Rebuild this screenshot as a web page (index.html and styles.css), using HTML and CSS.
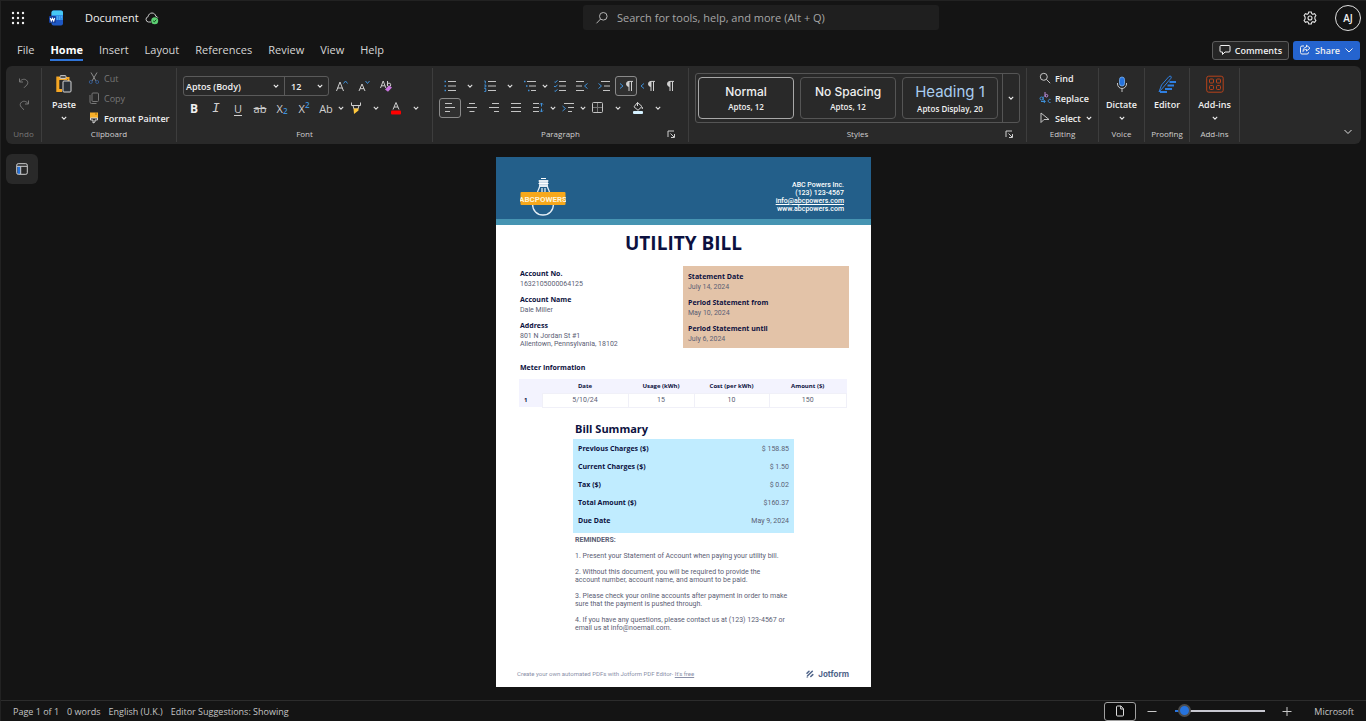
FILE: index.html
```html
<!DOCTYPE html>
<html lang="en">
<head>
    <meta charset="UTF-8">
    <meta name="viewport" content="width=device-width, initial-scale=1.0">
    <title>Document - Word</title>
    <link rel="stylesheet" href="styles.css">
</head>
<body>
    <!-- shared icons -->
    <svg class="sprite" aria-hidden="true">
        <symbol id="chev" viewBox="0 0 8 8"><path d="M1.8 2.9 4 5.1 6.2 2.9" fill="none" stroke="currentColor" stroke-width="1.1"/></symbol>
        <symbol id="launch" viewBox="0 0 9 9"><path d="M1 7V1h6M3.5 3.5 7 7M7.5 4v3.5H4" fill="none" stroke="currentColor"/></symbol>
        <symbol id="pilcrow" viewBox="0 0 10 12"><path d="M5 6.4a2.5 2.5 0 0 1 0-5h4M5 1.4V11M7.5 1.4V11" fill="none" stroke="currentColor"/><path d="M5 1.4a2.5 2.5 0 0 0 0 5z" fill="currentColor"/></symbol>
    </svg>

    <header class="titlebar">
        <div class="title-left">
            <button class="plain" aria-label="App launcher">
                <svg width="14" height="14" viewBox="0 0 14 14" fill="#f2f2f2"><circle cx="2" cy="2" r="1.2"/><circle cx="7" cy="2" r="1.2"/><circle cx="12" cy="2" r="1.2"/><circle cx="2" cy="7" r="1.2"/><circle cx="7" cy="7" r="1.2"/><circle cx="12" cy="7" r="1.2"/><circle cx="2" cy="12" r="1.2"/><circle cx="7" cy="12" r="1.2"/><circle cx="12" cy="12" r="1.2"/></svg>
            </button>
            <svg class="word-logo" width="14" height="16" viewBox="0 0 14 16">
                <rect x="2.5" y="0.5" width="11.500" height="15" rx="2" fill="#1e58c4"/>
                <path d="M4.500 .5H12a2 2 0 0 1 2 2V5H2.500V2.500a2 2 0 0 1 2-2z" fill="#46c8f5"/>
                <path d="M2.500 5H14v5H2.500z" fill="#2f8fe8"/>
                <path d="M8 7h1M10 7h1M12 7h1M8 9h1M10 9h1" stroke="#7cc8ff" stroke-width=".8"/>
                <rect x="0" y="6" width="7" height="7" rx="1" fill="#173f9c"/>
                <path d="M1.300 8 2.300 11 3.500 8.300 4.700 11 5.700 8" fill="none" stroke="#fff" stroke-width="1.1"/>
            </svg>
            <span class="doc-name">Document</span>
            <svg width="14" height="14" viewBox="0 0 14 14">
                <path d="M6 11H3.400a2.700 2.700 0 0 1-.3-5.300C3.400 3.500 5 2 7 2c2 0 3.500 1.400 3.800 3.300 1 .1 1.700.6 2 1.300" fill="none" stroke="#c8c8c8"/>
                <circle cx="9.700" cy="9.700" r="3.500" fill="#5ccf72"/>
                <path d="m8.200 9.900 1.100 1 2-2.200" fill="none" stroke="#14431d"/>
            </svg>
        </div>
        <label class="search">
            <svg width="14" height="14" viewBox="0 0 14 14" fill="none" stroke="#b4b4b4"><circle cx="8.300" cy="5.300" r="3.800"/><path d="M5.600 8 1.500 12.300"/></svg>
            <input type="text" placeholder="Search for tools, help, and more (Alt + Q)" aria-label="Search">
        </label>
        <div class="title-right">
            <button class="plain" aria-label="Settings">
                <svg width="14" height="14" viewBox="0 0 14 14" fill="none" stroke="#e6e6e6" stroke-width="1.100"><path d="M5.700 1h2.600l.4 1.700 1.200.6 1.700-.7 1.300 1.900-1 1.500v2l1 1.500-1.300 1.900-1.700-.7-1.200.6L8.300 13H5.700l-.4-1.700-1.200-.6-1.700.7L1.100 9.500l1-1.500V6l-1-1.500 1.300-1.900 1.700.7 1.200-.6z"/><circle cx="7" cy="7" r="2"/></svg>
            </button>
            <button class="avatar">AJ</button>
        </div>
    </header>

    <div class="tabbar">
        <nav class="tabs">
            <a href="#">File</a>
            <a href="#" class="active">Home</a>
            <a href="#">Insert</a>
            <a href="#">Layout</a>
            <a href="#">References</a>
            <a href="#">Review</a>
            <a href="#">View</a>
            <a href="#">Help</a>
        </nav>
        <div class="tab-actions">
            <button class="comments">
                <svg width="12" height="12" viewBox="0 0 12 12" fill="none" stroke="currentColor"><path d="M2 1.500h8a1 1 0 0 1 1 1V7a1 1 0 0 1-1 1H6l-2.500 2.500V8H2a1 1 0 0 1-1-1V2.500a1 1 0 0 1 1-1z"/></svg>
                Comments
            </button>
            <button class="share">
                <svg width="12" height="12" viewBox="0 0 12 12" fill="none" stroke="currentColor"><path d="M5 2H3a1.500 1.500 0 0 0-1.500 1.500v5A1.500 1.500 0 0 0 3 10h5a1.500 1.500 0 0 0 1.500-1.500V8"/><path d="M7.500 1.200 11 4.200 7.500 7V5.400C5.700 5.400 4.800 6 4 7.500c0-2.500 1.200-4.200 3.500-4.500z"/></svg>
                Share
                <svg width="10" height="10" viewBox="0 0 10 10"><path d="M1.500 3.500 5 7l3.500-3.500" fill="none" stroke="currentColor"/></svg>
            </button>
        </div>
    </div>

    <section class="ribbon">
        <div class="group undo">
            <div class="content stack">
                <button class="tool dim" aria-label="Undo"><svg width="12" height="12" viewBox="0 0 12 12" fill="none" stroke="currentColor"><path d="M1.500 1.500V5H5M1.700 4.800C3.300 2.500 6 1.500 8.300 3c2 1.500 1.800 3.700.5 5L6 10.800"/></svg></button>
                <button class="tool dim" aria-label="Redo"><svg width="12" height="12" viewBox="0 0 12 12" fill="none" stroke="currentColor"><path d="M10.500 1.500V5H7M10.300 4.800C8.700 2.500 6 1.500 3.700 3c-2 1.500-1.800 3.700-.5 5L6 10.800"/></svg></button>
            </div>
            <div class="label dim"><span>Undo</span></div>
        </div>

        <div class="group clipboard">
            <div class="content">
                <button class="big">
                    <svg width="18" height="20" viewBox="0 0 18 20"><path d="M4 4H2.800v12.500H7" fill="none" stroke="#f5a623" stroke-width="3"/><path d="M4 3h8v3H4z" fill="#f5a623"/><path d="M12 4h1.500v3" fill="none" stroke="#f5a623" stroke-width="2"/><rect x="5" y="1.500" width="6" height="3" rx="1" fill="#555" stroke="#ddd" stroke-width=".8"/><rect x="8" y="7" width="8" height="11" rx="1" fill="#2b3138" stroke="#d6d6d6"/></svg>
                    <span>Paste</span>
                    <svg width="8" height="8"><use href="#chev"/></svg>
                </button>
                <div class="lines">
                    <button class="line dim"><svg width="12" height="12" viewBox="0 0 12 12" fill="none"><path d="M3 .5 8 9M9 .5 4 9" stroke="#8b8b8b"/><circle cx="2.800" cy="10" r="1.500" stroke="#35598c"/><circle cx="9.200" cy="10" r="1.500" stroke="#35598c"/></svg>Cut</button>
                    <button class="line dim"><svg width="12" height="12" viewBox="0 0 12 12" fill="none" stroke="currentColor"><rect x="4" y="1" width="6.500" height="8.500" rx="1"/><path d="M2 3v7a1.500 1.500 0 0 0 1.500 1.500h5"/></svg>Copy</button>
                    <button class="line"><svg width="12" height="12" viewBox="0 0 12 12"><path d="M2 .5h8V6H2z" fill="#f8b02a"/><path d="M8 .5V3" stroke="#8a5a00" stroke-width=".8"/><path d="M2.500 6v2H5v3l2-1V8h2.500V6z" fill="#2a2a2a" stroke="#e4e4e4" stroke-width=".9"/></svg>Format Painter</button>
                </div>
            </div>
            <div class="label"><span>Clipboard</span></div>
        </div>

        <div class="group font">
            <div class="content rows">
                <div class="row">
                    <div class="combo">
                        <button class="combo-font">Aptos (Body)<svg width="8" height="8"><use href="#chev"/></svg></button>
                        <button class="combo-size">12<svg width="8" height="8"><use href="#chev"/></svg></button>
                    </div>
                    <button class="tool push" aria-label="Grow font"><svg width="14" height="14" viewBox="0 0 14 14" fill="none"><path d="M1.500 12 5 3l3.500 9M2.700 9h4.600" stroke="#cfcfcf"/><path d="m8.500 4.500 2-2.500 2 2.500" stroke="#3f90d8"/></svg></button>
                    <button class="tool" aria-label="Shrink font"><svg width="14" height="14" viewBox="0 0 14 14" fill="none"><path d="M2 12l3-7 3 7M3 9.700h4" stroke="#cfcfcf"/><path d="m8.500 2 2 2.500 2-2.500" stroke="#3f90d8"/></svg></button>
                    <button class="tool" aria-label="Clear formatting"><svg width="14" height="14" viewBox="0 0 14 14" fill="none"><path d="m1.500 9 2.700-7 2.700 7M2.500 6.800h3.400M8.500 2v5" stroke="#cfcfcf"/><circle cx="10" cy="5.800" r="1.700" stroke="#cfcfcf"/><path d="m6 10.500 4-4 3 2-4 4.300z" fill="#c774dd"/></svg></button>
                </div>
                <div class="row">
                    <button class="tool bold">B</button>
                    <button class="tool italic">I</button>
                    <button class="tool under">U</button>
                    <button class="tool strike">ab</button>
                    <button class="tool script">X<sub>2</sub></button>
                    <button class="tool script">X<sup>2</sup></button>
                    <button class="tool">Ab</button>
                    <button class="drop" aria-label="Change case options"><svg width="8" height="8"><use href="#chev"/></svg></button>
                    <button class="tool" aria-label="Highlight"><svg width="14" height="14" viewBox="0 0 14 14" fill="none"><path d="M2.500 1.500v3h9v-3M4 4.500 5 8h4l1-3.500" stroke="#cfcfcf"/><path d="M4.500 7.500h5v2L5 13z" fill="#ffc83d"/></svg></button>
                    <button class="drop wide" aria-label="Highlight options"><svg width="8" height="8"><use href="#chev"/></svg></button>
                    <button class="tool" aria-label="Font color"><svg width="14" height="14" viewBox="0 0 14 14" fill="none"><path d="m4 8.500 3-7 3 7M5 6h4" stroke="#cfcfcf"/><rect x="2" y="9.500" width="10" height="4" rx="1" fill="#f00"/></svg></button>
                    <button class="drop wide" aria-label="Font color options"><svg width="8" height="8"><use href="#chev"/></svg></button>
                </div>
            </div>
            <div class="label"><span>Font</span></div>
        </div>

        <div class="group paragraph">
            <div class="content rows">
                <div class="row">
                    <button class="tool" aria-label="Bullets"><svg width="12" height="12" viewBox="0 0 12 12"><path d="M4 1.500h8M4 6h8M4 10.500h8" stroke="#c4c4c4"/><path d="M.5 1.500h1.500M.5 6h1.500M.5 10.500h1.500" stroke="#3f90d8" stroke-width="1.500"/></svg></button>
                    <button class="drop wide" aria-label="Bullet options"><svg width="8" height="8"><use href="#chev"/></svg></button>
                    <button class="tool" aria-label="Numbering"><svg width="12" height="12" viewBox="0 0 12 12"><path d="M4 1.500h8M4 6h8M4 10.500h8" stroke="#c4c4c4"/><path d="M.3 1h1v2.500M.3 5h1.500v2H.3M.3 8.500h1.500v3H.3" fill="none" stroke="#3f90d8"/></svg></button>
                    <button class="drop wide" aria-label="Numbering options"><svg width="8" height="8"><use href="#chev"/></svg></button>
                    <button class="tool" aria-label="Multilevel list"><svg width="12" height="12" viewBox="0 0 12 12"><path d="M3 1.500h9M5 6h7M7 10.500h5" stroke="#c4c4c4"/><path d="M0 1.500h1.500M2 6h1.500M4 10.500h1.500" stroke="#3f90d8" stroke-width="1.500"/></svg></button>
                    <button class="drop" aria-label="Multilevel options"><svg width="8" height="8"><use href="#chev"/></svg></button>
                    <button class="tool" aria-label="Checklist"><svg width="12" height="12" viewBox="0 0 12 12" fill="none"><path d="M5 1.500h7M5 6h7M5 10.500h7" stroke="#c4c4c4"/><path d="m0 1.500 1 1L3.500.5M0 6l1 1L3.500 5M0 10.500l1 1 2.500-2" stroke="#3f90d8"/></svg></button>
                    <button class="tool" aria-label="Decrease indent"><svg width="12" height="12" viewBox="0 0 12 12" fill="none"><path d="M0 1.500h8M0 6h6M0 10.500h8" stroke="#c4c4c4"/><path d="M11.500 3.500 8.500 6l3 2.500" stroke="#3f90d8"/></svg></button>
                    <button class="tool" aria-label="Increase indent"><svg width="12" height="12" viewBox="0 0 12 12" fill="none"><path d="M3 1.500h9M6 6h6M5 10.500h7" stroke="#c4c4c4"/><path d="m.5 3.500 3 2.500-3 2.500" stroke="#3f90d8"/></svg></button>
                    <button class="tool on" aria-label="Left to right"><svg width="6" height="8" viewBox="0 0 6 8"><path d="m2 1.500 3 2.500-3 2.500" fill="none" stroke="#3f90d8"/></svg><svg width="10" height="12"><use href="#pilcrow"/></svg></button>
                    <button class="tool" aria-label="Right to left"><svg width="6" height="8" viewBox="0 0 6 8"><path d="M4 1.500 1 4l3 2.500" fill="none" stroke="#3f90d8"/></svg><svg width="10" height="12"><use href="#pilcrow"/></svg></button>
                    <button class="tool" aria-label="Show marks"><svg width="10" height="12"><use href="#pilcrow"/></svg></button>
                </div>
                <div class="row">
                    <button class="tool on" aria-label="Align left"><svg width="12" height="12" viewBox="0 0 12 12"><path d="M1 1.500h7M1 5.500h10M1 9.500h5" stroke="#c4c4c4"/></svg></button>
                    <button class="tool" aria-label="Center"><svg width="12" height="12" viewBox="0 0 12 12"><path d="M3 1.500h6M1 5.500h10M3.500 9.500h5" stroke="#c4c4c4"/></svg></button>
                    <button class="tool" aria-label="Align right"><svg width="12" height="12" viewBox="0 0 12 12"><path d="M4 1.500h7M1 5.500h10M6 9.500h5" stroke="#c4c4c4"/></svg></button>
                    <button class="tool" aria-label="Justify"><svg width="12" height="12" viewBox="0 0 12 12"><path d="M1 1.500h10M1 5.500h10M1 9.500h10" stroke="#c4c4c4"/></svg></button>
                    <button class="tool" aria-label="Line spacing"><svg width="12" height="12" viewBox="0 0 12 12" fill="none"><path d="M1 1.500h6M1 5.500h6M1 9.500h6" stroke="#c4c4c4"/><path d="M9.500 1v3.500M9.500 6.500V10M8 2.500 9.500 1 11 2.500M8 8.500 9.500 10 11 8.500" stroke="#3f90d8"/></svg></button>
                    <button class="drop" aria-label="Spacing options"><svg width="8" height="8"><use href="#chev"/></svg></button>
                    <button class="tool" aria-label="Special indent"><svg width="12" height="12" viewBox="0 0 12 12" fill="none"><path d="M2 1.500h10M6 5.500h6M6 9.500h4" stroke="#c4c4c4"/><path d="m.5 4 3 2.500-3 2.500" stroke="#3f90d8"/></svg></button>
                    <button class="drop" aria-label="Indent options"><svg width="8" height="8"><use href="#chev"/></svg></button>
                    <button class="tool" aria-label="Borders"><svg width="12" height="12" viewBox="0 0 12 12" fill="none"><rect x=".5" y=".5" width="10" height="10" rx="1" stroke="#c4c4c4"/><path d="M5.500 1v9M1 5.500h9" stroke="#777"/></svg></button>
                    <button class="drop wide" aria-label="Border options"><svg width="8" height="8"><use href="#chev"/></svg></button>
                    <button class="tool" aria-label="Shading"><svg width="12" height="14" viewBox="0 0 12 14" fill="none"><path d="M5.500 1.500 10 5.500 6 9.300 2 5.800zM5.500 1.500V5M10.300 6v2" stroke="#d8d8d8"/><rect x="1" y="10" width="10" height="3" rx="1" fill="#d4f1ff"/></svg></button>
                    <button class="drop wide" aria-label="Shading options"><svg width="8" height="8"><use href="#chev"/></svg></button>
                </div>
            </div>
            <div class="label"><span>Paragraph</span><button class="launcher" aria-label="Paragraph settings"><svg width="9" height="9"><use href="#launch"/></svg></button></div>
        </div>

        <div class="group styles">
            <div class="content">
                <div class="gallery">
                    <button class="style-card selected"><b>Normal</b><span>Aptos, 12</span></button>
                    <button class="style-card"><b>No Spacing</b><span>Aptos, 12</span></button>
                    <button class="style-card heading"><b>Heading 1</b><span>Aptos Display, 20</span></button>
                    <button class="more" aria-label="More styles"><svg width="8" height="8"><use href="#chev"/></svg></button>
                </div>
            </div>
            <div class="label"><span>Styles</span><button class="launcher" aria-label="Style settings"><svg width="9" height="9"><use href="#launch"/></svg></button></div>
        </div>

        <div class="group editing">
            <div class="content">
                <div class="lines">
                    <button class="line"><svg width="12" height="12" viewBox="0 0 12 12" fill="none" stroke="#c4c4c4"><circle cx="4.800" cy="4.800" r="3.500"/><path d="m7.400 7.400 3.800 3.800"/></svg>Find</button>
                    <button class="line"><svg width="12" height="12" viewBox="0 0 12 12" fill="none"><path d="M6 0v5" stroke="#b98bd8"/><circle cx="7.500" cy="3.700" r="1.300" stroke="#b98bd8"/><circle cx="2.500" cy="6.500" r="1.500" stroke="#3f90d8"/><path d="M4.200 4.500V8.500M2 9.500h4M4.800 8l1.500 1.500L4.800 11M11.500 7.500c-2.500-1-3.500 3.500 0 3" stroke="#3f90d8"/></svg>Replace</button>
                    <button class="line"><svg width="12" height="12" viewBox="0 0 12 12" fill="none" stroke="#c4c4c4"><path d="M2 1v9.500l3-3h5z"/></svg>Select<svg width="8" height="8"><use href="#chev"/></svg></button>
                </div>
            </div>
            <div class="label"><span>Editing</span></div>
        </div>

        <div class="group voice">
            <div class="content">
                <button class="big">
                    <svg width="18" height="20" viewBox="0 0 18 20" fill="none"><rect x="6.500" y="3" width="5" height="9" rx="2.500" fill="#2673dd" stroke="#78b0f0" stroke-width=".8"/><path d="M4.500 9v1a4.500 4.500 0 0 0 9 0V9M9 14.500V18" stroke="#c4c4c4"/></svg>
                    <span>Dictate</span>
                    <svg width="8" height="8"><use href="#chev"/></svg>
                </button>
            </div>
            <div class="label"><span>Voice</span></div>
        </div>

        <div class="group proofing">
            <div class="content">
                <button class="big">
                    <svg width="20" height="20" viewBox="0 0 20 20" fill="none" stroke="#2f7fe0"><path d="M2 18 4.500 11 12 2.500c1.500-1 3 0 2 1.700L6.500 13 2 18z"/><path d="M12.500 8H19M10.500 11.500H17M8 15h7M3 18h7" stroke-width="2"/></svg>
                    <span>Editor</span>
                </button>
            </div>
            <div class="label"><span>Proofing</span></div>
        </div>

        <div class="group addins">
            <div class="content">
                <button class="big">
                    <svg width="18" height="20" viewBox="0 0 18 20" fill="none" stroke="#b8431b"><rect x=".7" y="2.200" width="16.500" height="16" rx="2"/><rect x="3.500" y="5" width="4" height="4" rx="1"/><rect x="10.500" y="5" width="4" height="4" rx="1"/><rect x="3.500" y="11.500" width="4" height="4" rx="1"/><rect x="10.500" y="11.500" width="4" height="4" rx="1"/></svg>
                    <span>Add-ins</span>
                    <svg width="8" height="8"><use href="#chev"/></svg>
                </button>
            </div>
            <div class="label"><span>Add-ins</span></div>
        </div>

        <button class="collapse" aria-label="Collapse ribbon"><svg width="12" height="12" viewBox="0 0 12 12"><path d="m2.500 4 3.500 3.500L9.500 4" fill="none" stroke="#e0e0e0"/></svg></button>
    </section>

    <main class="canvas">
        <button class="nav-toggle" aria-label="Navigation pane">
            <svg width="12" height="12" viewBox="0 0 12 12" fill="none"><rect x="1.500" y="3" width="3" height="8" fill="#2673dd"/><rect x=".7" y=".7" width="10.600" height="10.600" rx="1.500" stroke="#d0d0d0"/><path d="M1 3.300h10M4.700 3.500V11" stroke="#d0d0d0"/></svg>
        </button>

        <article class="page">
            <header class="bill-head">
                <svg width="46" height="42" viewBox="0 0 46 42" role="img" aria-label="ABC Powers">
                    <path d="M19 4h9v7h-9z" fill="#c9d9e6"/>
                    <path d="M21 2.500h5M18.500 5h10M18.500 7.500h10M19 10h9" stroke="#fff" stroke-width="1.200"/>
                    <path d="M19.500 10.500c0 2-2 4-2 6M27.500 10.500c0 2 2 4 2 6M22 12v5M25 12v5M12.500 28c0 6.500 4.500 11 10.500 11s10.500-4.500 10.500-11" fill="none" stroke="#e4eef5" stroke-width="1.300"/>
                    <rect x=".5" y="16" width="45" height="13" rx="1" fill="#f7a81b"/>
                    <text class="logo-text" x="23" y="26" text-anchor="middle">ABCPOWERS</text>
                </svg>
                <address>
                    ABC Powers Inc.<br>
                    (123) 123-4567<br>
                    <a href="#">info@abcpowers.com</a><br>
                    www.abcpowers.com
                </address>
            </header>

            <h1>UTILITY BILL</h1>

            <div class="details">
                <dl class="account">
                    <dt>Account No.</dt><dd>1632105000064125</dd>
                    <dt>Account Name</dt><dd>Dale Miller</dd>
                    <dt>Address</dt><dd>801 N Jordan St #1<br>Allentown, Pennsylvania, 18102</dd>
                </dl>
                <dl class="statement">
                    <dt>Statement Date</dt><dd>July 14, 2024</dd>
                    <dt>Period Statement from</dt><dd>May 10, 2024</dd>
                    <dt>Period Statement until</dt><dd>July 6, 2024</dd>
                </dl>
            </div>

            <h3>Meter Information</h3>
            <table class="meter">
                <thead>
                    <tr><th class="c-no"></th><th class="c-date">Date</th><th class="c-usage">Usage (kWh)</th><th class="c-cost">Cost (per kWh)</th><th>Amount ($)</th></tr>
                </thead>
                <tbody>
                    <tr><th class="row-no">1</th><td>5/10/24</td><td>15</td><td>10</td><td>150</td></tr>
                </tbody>
            </table>

            <div class="summary">
                <h2>Bill Summary</h2>
                <dl class="charges">
                    <div><dt>Previous Charges ($)</dt><dd>$ 158.85</dd></div>
                    <div><dt>Current Charges ($)</dt><dd>$ 1.50</dd></div>
                    <div><dt>Tax ($)</dt><dd>$ 0.02</dd></div>
                    <div><dt>Total Amount ($)</dt><dd>$160.37</dd></div>
                    <div><dt>Due Date</dt><dd>May 9, 2024</dd></div>
                </dl>
                <div class="reminders">
                    <p><b>REMINDERS:</b></p>
                    <p>1. Present your Statement of Account when paying your utility bill.</p>
                    <p>2. Without this document, you will be required to provide the<br>account number, account name, and amount to be paid.</p>
                    <p>3. Please check your online accounts after payment in order to make<br>sure that the payment is pushed through.</p>
                    <p>4. If you have any questions, please contact us at (123) 123-4567 or<br>email us at info@noemail.com.</p>
                </div>
            </div>

            <footer class="page-foot">
                <span>Create your own automated PDFs with Jotform PDF Editor- <a href="#">It's free</a></span>
                <span class="jotform">
                    <svg width="8" height="8" viewBox="0 0 8 8" fill="none" stroke="#4f6489" stroke-width="1.500" stroke-linecap="round"><path d="M1 3.200 3 1.200M1.600 5.800 6.300 1.200M4.800 6.500 6.800 4.600"/><path d="M1 7h.6" stroke-width="1.200"/></svg>
                    Jotform
                </span>
            </footer>
        </article>
    </main>

    <footer class="statusbar">
        <span>Page 1 of 1</span>
        <span>0 words</span>
        <span>English (U.K.)</span>
        <span>Editor Suggestions: Showing</span>
        <div class="zoom">
            <button class="view" aria-label="Page view"><svg width="10" height="12" viewBox="0 0 10 12" fill="none" stroke="#dcdcdc"><path d="M2.500 1H6l2.500 2.800V10a1 1 0 0 1-1 1h-5a1 1 0 0 1-1-1V2a1 1 0 0 1 1-1zM5.700 1v3h2.800"/></svg></button>
            <button class="plain" aria-label="Zoom out"><svg width="10" height="10" viewBox="0 0 10 10"><path d="M.5 5.500h9" stroke="#c8c8c8"/></svg></button>
            <input type="range" min="10" max="500" value="30" aria-label="Zoom">
            <button class="plain" aria-label="Zoom in"><svg width="10" height="10" viewBox="0 0 10 10"><path d="M.5 5.500h9M5 1v9" stroke="#c8c8c8"/></svg></button>
            <span class="brand">Microsoft</span>
        </div>
    </footer>
</body>
</html>
```
FILE: styles.css
```css
* {
    box-sizing: border-box;
}

body {
    margin: 0;
    min-height: 100vh;
    display: flex;
    flex-direction: column;
    background: #141414;
    border-top: 1px solid #222;
    border-left: 1px solid #222;
    color: #f0f0f0;
    font-family: "Open Sans", "Noto Sans", sans-serif;
    font-size: 11px;
}

button {
    font: inherit;
    color: inherit;
    background: none;
    border: none;
    padding: 0;
    cursor: pointer;
    white-space: nowrap;
}

svg {
    display: block;
    flex: none;
}

.sprite {
    position: absolute;
    width: 0;
    height: 0;
}

.dim {
    color: #777;
}

/* title bar */
.titlebar {
    display: grid;
    grid-template-columns: 582fr 356fr 427fr;
    align-items: center;
    height: 33px;
}

.title-left {
    display: flex;
    align-items: center;
    padding-left: 10px;
}

.word-logo {
    margin-left: 24px;
}

.doc-name {
    margin: 0 6px 0 22px;
}

.search {
    display: flex;
    align-items: center;
    gap: 8px;
    height: 25px;
    padding: 0 12px;
    background: #1f1f1f;
    border-radius: 3px;
}

.search input {
    flex: 1;
    min-width: 0;
    padding: 0;
    border: none;
    outline: none;
    background: none;
    color: #ddd;
    font: inherit;
}

.search input::placeholder {
    color: #a6a6a6;
}

.title-right {
    display: flex;
    justify-content: flex-end;
    align-items: center;
    gap: 18px;
    padding-right: 5px;
}

.avatar {
    width: 26px;
    height: 26px;
    border: 1px solid #e0e0e0;
    border-radius: 50%;
    font-size: 10px;
    font-weight: 600;
}

/* tabs */
.tabbar {
    display: flex;
    justify-content: space-between;
    align-items: center;
    height: 32px;
    padding: 0 6px 0 16px;
}

.tabs {
    display: flex;
    gap: 16px;
}

.tabs a {
    color: #d6d6d6;
    text-decoration: none;
    line-height: 18px;
    padding-top: 1px;
    border-bottom: 2px solid transparent;
}

.tabs .active {
    color: #fff;
    font-weight: 700;
    border-color: #2f74d8;
}

.tab-actions {
    display: flex;
    gap: 4px;
    font-size: 9px;
}

.comments,
.share {
    display: flex;
    align-items: center;
    gap: 4px;
    height: 19px;
    padding: 0 6px;
    border-radius: 3px;
    font-weight: 600;
}

.comments {
    background: #252525;
    border: 1px solid #5c5c5c;
}

.share {
    background: #2564cf;
}

/* ribbon */
.ribbon {
    display: flex;
    margin: 0 5px;
    background: #292929;
    border-radius: 6px;
}

.group {
    display: flex;
    flex-direction: column;
    flex: none;
    margin: 2px 0;
    padding-bottom: 2px;
    border-right: 1px solid #3d3d3d;
}

.undo { width: 36px; }
.clipboard { width: 135px; }
.font { width: 256px; }
.paragraph { width: 256px; }
.styles { width: 338px; }
.editing { width: 72px; }
.voice { width: 46px; }
.proofing { width: 45px; }
.addins { width: 50px; }

.content {
    display: flex;
    height: 60px;
    padding: 0 6px;
}

.label {
    display: grid;
    grid-template-columns: 1fr auto 1fr;
    align-items: center;
    height: 12px;
    font-size: 8px;
    line-height: 12px;
    color: #d0d0d0;
}

.label span {
    grid-column: 2;
}

.label.dim {
    color: #777;
}

.launcher {
    justify-self: end;
    margin-right: 12px;
}

.stack {
    flex-direction: column;
    align-items: center;
    padding-top: 5px;
    gap: 2px;
}

.rows {
    flex-direction: column;
    gap: 2px;
    padding-top: 8px;
}

.row {
    display: flex;
    align-items: center;
    height: 20px;
}

.tool {
    display: flex;
    justify-content: center;
    align-items: center;
    width: 22px;
    height: 20px;
    border-radius: 3px;
    color: #d0d0d0;
}

.undo .tool {
    color: #777;
}

.tool.on {
    border: 1px solid #8a8a8a;
    background: #303030;
}

.tool.push {
    margin-left: 2px;
}

.tool.bold {
    font-weight: 700;
    font-size: 12px;
    color: #f0f0f0;
}

.tool.italic {
    font-family: "Liberation Mono", monospace;
    font-style: italic;
    font-size: 13px;
}

.tool.under {
    text-decoration: underline;
    text-underline-offset: 2px;
}

.tool.strike {
    text-decoration: line-through;
}

.script sub,
.script sup {
    font-size: 8px;
    line-height: 8px;
    font-weight: 600;
    color: #3f90d8;
}

.script sub {
    align-self: flex-end;
    padding-bottom: 3px;
}

.script sup {
    align-self: flex-start;
    padding-top: 3px;
}

.drop {
    display: flex;
    justify-content: center;
    width: 8px;
    color: #e0e0e0;
}

.drop.wide {
    width: 18px;
}

.combo {
    display: flex;
    height: 20px;
    border: 1px solid #5a5a5a;
    border-radius: 3px;
    font-size: 9px;
    font-weight: 600;
}

.combo button {
    display: flex;
    justify-content: space-between;
    align-items: center;
}

.combo-font {
    width: 100px;
    padding: 0 4px 0 2px;
}

.combo .combo-size {
    width: 44px;
    padding: 0 4px 0 6px;
    border-left: 1px solid #5a5a5a;
}

.big {
    display: flex;
    flex-direction: column;
    align-items: center;
    width: 100%;
    padding-top: 6px;
    font-size: 9px;
    line-height: 14px;
    font-weight: 600;
}

.big span {
    margin: 4px 0 2px;
}

.voice .content,
.proofing .content,
.addins .content {
    padding: 0;
}

.clipboard .big {
    flex: none;
    width: 32px;
    margin-right: 8px;
}

.lines {
    display: flex;
    flex-direction: column;
}

.line {
    display: flex;
    align-items: center;
    gap: 4px;
    height: 20px;
    font-size: 9px;
    font-weight: 600;
}

.line.dim {
    font-weight: 400;
}

.editing .content {
    padding-left: 12px;
}

.gallery {
    display: flex;
    gap: 6px;
    align-items: center;
    width: 325px;
    height: 50px;
    margin-top: 5px;
    padding-left: 2px;
    border: 1px solid #555;
    border-radius: 3px;
}

.style-card {
    display: flex;
    flex-direction: column;
    justify-content: center;
    align-items: center;
    width: 96px;
    height: 42px;
    border: 1px solid #555;
    border-radius: 4px;
    font-size: 8px;
    line-height: 12px;
    font-weight: 600;
}

.style-card b {
    font-family: Inter, sans-serif;
    font-size: 12px;
    line-height: 18px;
    font-weight: 500;
}

.style-card.selected {
    border-color: #a8a8a8;
}

.style-card.heading b {
    font-size: 15px;
    line-height: 22px;
    font-weight: 400;
    color: #a9cdf0;
}

.more {
    display: flex;
    flex: 1;
    justify-content: center;
    align-items: center;
    align-self: stretch;
    margin-left: -2px;
    border-left: 1px solid #555;
}

.collapse {
    margin: auto 7px 6px auto;
}

/* canvas */
.canvas {
    flex: 1;
    display: grid;
    grid-template-columns: 1fr auto 1fr;
    align-items: start;
    padding: 0 0 13px;
}

.nav-toggle {
    display: flex;
    justify-content: center;
    align-items: center;
    width: 32px;
    height: 30px;
    margin: 10px 0 0 5px;
    background: #292929;
    border-radius: 6px;
}

.page {
    display: flex;
    flex-direction: column;
    width: 375px;
    min-height: 530px;
    margin-top: 13px;
    background: #fff;
    color: #5b6074;
    font-family: Roboto, sans-serif;
    font-size: 7px;
    line-height: 8px;
}

.page h1,
.page h2,
.page h3,
.page p,
.page dl,
.page dd {
    margin: 0;
}

.page h1,
.page h2,
.page h3,
.page dt,
.page th {
    color: #0c1140;
    font-family: "Open Sans", "Noto Sans", sans-serif;
    font-weight: 700;
}

.bill-head {
    display: flex;
    justify-content: space-between;
    align-items: flex-start;
    height: 68px;
    padding: 19px 27px 0 24px;
    background: #235f8a;
    border-bottom: 6px solid #4694b2;
}

.logo-text {
    font-family: "Liberation Sans Narrow", Roboto, sans-serif;
    font-size: 8px;
    font-weight: 700;
    fill: #fff3d6;
}

.bill-head address {
    padding-top: 5px;
    color: #fff;
    font-style: normal;
    font-weight: 500;
    text-align: right;
}

.bill-head a {
    color: inherit;
}

.page h1 {
    padding: 6px 0 11px;
    font-size: 19px;
    line-height: 24px;
    text-align: center;
}

.details {
    display: flex;
    justify-content: space-between;
    padding: 0 22px 0 24px;
}

.details dt {
    line-height: 12px;
}

.details dd + dt {
    margin-top: 6px;
}

.account {
    padding-top: 2px;
}

.statement {
    width: 166px;
    padding: 5px;
    background: #e3c3a8;
}

.page h3 {
    padding: 15px 24px 6px;
    font-size: 7px;
    line-height: 10px;
}

.meter {
    width: 328px;
    margin-left: 23px;
    border-collapse: collapse;
    table-layout: fixed;
    text-align: center;
}

.meter th,
.meter td {
    height: 14px;
    padding: 0;
}

.meter th {
    background: #f3f3fe;
    font-size: 6px;
}

.meter td {
    border: 1px solid #f0f0f8;
}

.meter .row-no {
    padding-left: 5px;
    text-align: left;
}

.c-no { width: 23px; }
.c-date { width: 86px; }
.c-usage { width: 66px; }
.c-cost { width: 75px; }

.summary {
    width: 221px;
    margin: 13px 0 0 77px;
}

.page h2 {
    padding: 0 2px 2px;
    font-size: 11px;
    line-height: 16px;
}

.charges {
    padding: 1px 5px 3px;
    background: #c0ecff;
}

.charges div {
    display: flex;
    justify-content: space-between;
    line-height: 18px;
}

.reminders {
    display: flex;
    flex-direction: column;
    gap: 8px;
    padding: 3px 0 0 2px;
    white-space: nowrap;
}

.page-foot {
    display: flex;
    justify-content: space-between;
    align-items: center;
    margin-top: auto;
    padding: 0 22px 9px 21px;
    color: #8a90a8;
    font-size: 6px;
}

.page-foot a {
    color: inherit;
}

.jotform {
    display: flex;
    align-items: center;
    gap: 4px;
    color: #4f6489;
    font-family: Inter, sans-serif;
    font-size: 8px;
    font-weight: 700;
}

/* status bar */
.statusbar {
    display: flex;
    align-items: center;
    gap: 8px;
    height: 21px;
    padding: 0 12px;
    border-top: 1px solid #2c2c2c;
    color: #c4c4c4;
    font-size: 9px;
}

.zoom {
    display: flex;
    align-items: center;
    margin-left: auto;
}

.view {
    display: flex;
    justify-content: center;
    align-items: center;
    width: 32px;
    height: 19px;
    margin-right: 11px;
    border: 1px solid #a0a0a0;
    border-radius: 3px;
    background: #0c0c0c;
}

.zoom input {
    appearance: none;
    width: 90px;
    height: 14px;
    margin: 0 17px 0 18px;
    background: none;
}

.zoom input::-webkit-slider-runnable-track {
    height: 2px;
    background: linear-gradient(to right, #2673dd 4px, #c8c8d0 4px);
}

.zoom input::-webkit-slider-thumb {
    appearance: none;
    width: 13px;
    height: 13px;
    margin-top: -6px;
    border: 2px solid #4c4c4c;
    border-radius: 50%;
    background: #2673dd;
}

.brand {
    margin-left: 22px;
}
```
